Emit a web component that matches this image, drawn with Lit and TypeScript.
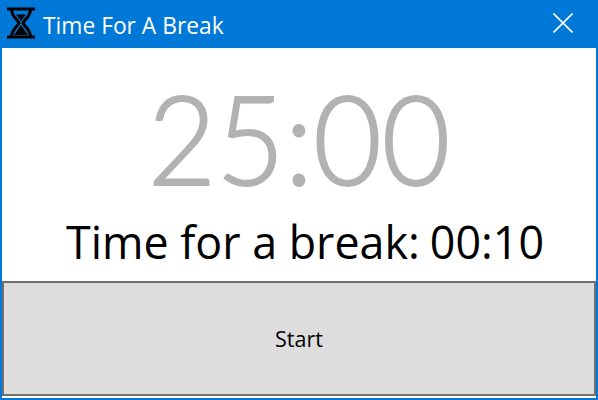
import { LitElement, html, css } from 'lit';
import { customElement } from 'lit/decorators.js';

@customElement('app-root')
export class AppRoot extends LitElement {
  static styles = css`
    :host {
      display: flex;
      flex-direction: column;
      box-sizing: border-box;
      width: 598px;
      height: 400px;
      border: 2px solid #0078d7;
      border-top: 0;
      background: #fff;
      font-family: 'Open Sans', 'Noto Sans', sans-serif;
    }
    .titlebar {
      display: flex;
      align-items: center;
      height: 48px;
      flex: none;
      margin: 0 -2px;
      padding: 0 25px 3px 7px;
      box-sizing: border-box;
      background: #0078d7;
      color: #fff;
      font-size: 22.8px;
    }
    .hourglass {
      width: 28px;
      height: 32px;
      margin-right: 8px;
    }
    .title {
      flex: 1;
      padding-top: 5px;
    }
    .close {
      width: 20px;
      height: 20px;
    }
    .main {
      flex: 1;
      display: flex;
      flex-direction: column;
      align-items: center;
    }
    .clock {
      margin-top: 29px;
      font-family: Lato, 'Open Sans', sans-serif;
      font-size: 125px;
      font-weight: 300;
      line-height: 120px;
      color: #b2b2b2;
      -webkit-text-stroke: 2px #b2b2b2;
      transform: scaleX(0.945);
    }
    .break {
      display: flex;
      gap: 10px;
      margin-top: 20px;
      font-size: 44.8px;
      line-height: 50px;
      color: #000;
      padding-left: 12px;
    }
    button {
      flex: none;
      height: 115px;
      margin-bottom: 2px;
      padding: 0;
      border: 2px solid #707070;
      background: #ddd;
      color: #000;
      font: inherit;
      font-size: 21.5px;
    }
  `;

  render() {
    return html`
      <div class="titlebar">
        <svg class="hourglass" viewBox="0 0 28 32">
          <path d="M0 2H28M0 30H28" stroke="#000" stroke-width="3" fill="none" />
          <path d="M4.5 2C4.5 10 11 12.5 12 16C11 19.5 4.5 22 4.5 30M23.5 2C23.5 10 17 12.5 16 16C17 19.5 23.5 22 23.5 30" stroke="#000" stroke-width="3" fill="none" />
          <path d="M9 7.5H19L14 14ZM14 18L21 28H7Z" fill="#000" />
        </svg>
        <span class="title">Time For A Break</span>
        <svg class="close" viewBox="0 0 20 20">
          <path d="M0.5 0.5L19.5 19.5M19.5 0.5L0.5 19.5" stroke="#fff" stroke-width="1.6" fill="none" />
        </svg>
      </div>
      <div class="main">
        <div class="clock">25:00</div>
        <div class="break"><span>Time for a break:</span><span>00:10</span></div>
      </div>
      <button>Start</button>
    `;
  }
}
